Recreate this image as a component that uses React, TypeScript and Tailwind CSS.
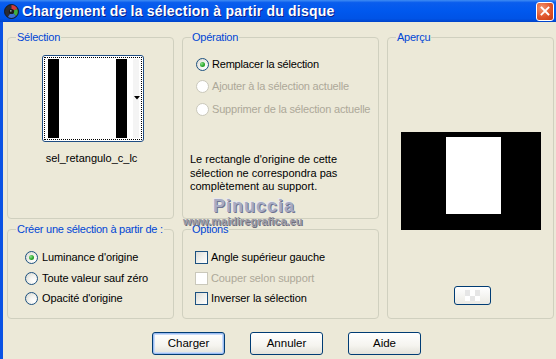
import React from "react";

function Radio({ checked = false, disabled = false }: { checked?: boolean; disabled?: boolean }) {
  return (
    <span
      className={
        "relative flex h-[13px] w-[13px] shrink-0 items-center justify-center rounded-full border " +
        (disabled
          ? "border-[#CAC8BB] bg-white"
          : "border-[#1C5180] bg-[radial-gradient(circle_at_70%_70%,#ffffff_0%,#f3f3ef_40%,#d6d5cc_100%)]")
      }
    >
      {checked && (
        <span className="h-[5px] w-[5px] rounded-full bg-[radial-gradient(circle_at_35%_35%,#8fe08f_0%,#2aa92a_55%,#1a7f1a_100%)]" />
      )}
    </span>
  );
}

function Check({ disabled = false }: { disabled?: boolean }) {
  return (
    <span
      className={
        "h-[13px] w-[13px] shrink-0 border " +
        (disabled
          ? "border-[#CAC8BB] bg-white"
          : "border-[#1C5180] bg-[linear-gradient(135deg,#dcdcd7_0%,#f0f0ec_50%,#ffffff_100%)]")
      }
    />
  );
}

function Group({
  label,
  className = "",
  children,
}: {
  label: string;
  className?: string;
  children?: React.ReactNode;
}) {
  return (
    <div className={"relative rounded-[4px] border border-[#D0D0BF] " + className}>
      <span className="absolute left-[8px] top-[-8px] whitespace-nowrap bg-[#ECE9D8] px-[1px] leading-[14px] tracking-[-0.25px] text-[#0046D5]">
        {label}
      </span>
      {children}
    </div>
  );
}

function XPButton({ label, def = false }: { label: string; def?: boolean }) {
  return (
    <div
      className={
        "flex h-[23px] w-[73px] items-center justify-center rounded-[3px] border border-[#003C74] bg-[linear-gradient(to_bottom,#ffffff_0%,#f5f4ef_60%,#e3e2da_100%)] text-black " +
        (def ? "shadow-[inset_0_0_0_1px_#9bbcf2,inset_0_0_0_2px_#c9dbf8]" : "")
      }
    >
      {label}
    </div>
  );
}

export default function App() {
  return (
    <div className="flex h-[359px] w-[556px] flex-col overflow-hidden bg-[#ECE9D8] font-['Liberation_Sans',Arial,sans-serif] text-[11px] text-black">
      {/* Title bar */}
      <div className="flex h-[22px] shrink-0 items-center bg-[linear-gradient(to_bottom,#3f8cf3_0%,#0a5ded_12%,#0058ee_50%,#0053e6_85%,#0043c9_100%)] pl-[4px] pr-[2px]">
        <svg width="15" height="15" viewBox="0 0 15 15" className="shrink-0">
          <circle cx="7.5" cy="7.5" r="7" fill="#2b2b33" stroke="#111" strokeWidth="0.8" />
          <path d="M7.5 7.5 L7.5 1 A6.5 6.5 0 0 1 13.2 5 Z" fill="#d23a3a" />
          <path d="M7.5 7.5 L13.2 5 A6.5 6.5 0 0 1 12 12 Z" fill="#3fae3f" />
          <path d="M7.5 7.5 L12 12 A6.5 6.5 0 0 1 4 13 Z" fill="#3a6fd8" />
          <circle cx="7.5" cy="7.5" r="2.6" fill="#1a1a1a" />
          <circle cx="6.8" cy="6.8" r="0.9" fill="#9aa" />
        </svg>
        <span className="ml-[3px] flex-1 whitespace-nowrap text-[14px] font-bold tracking-[0.2px] text-white [text-shadow:1px_1px_0_#0a1e8a]">
          Chargement de la sélection à partir du disque
        </span>
        <div className="flex h-[19px] w-[18px] items-center justify-center rounded-[3px] border border-white bg-[radial-gradient(circle_at_30%_30%,#f0926e_0%,#e0552b_55%,#c63a12_100%)]">
          <svg width="10" height="10" viewBox="0 0 10 10">
            <path d="M1.5 1.5 L8.5 8.5 M8.5 1.5 L1.5 8.5" stroke="white" strokeWidth="1.8" strokeLinecap="square" />
          </svg>
        </div>
      </div>

      {/* Body */}
      <div className="relative flex flex-1 flex-col border-l-[3px] border-[#0A52E4] pl-[4px] pt-[15px]">
        <div className="grid grid-cols-[167px_197px_167px] grid-rows-[182px_90px] gap-x-[8px] gap-y-[10px]">
          {/* Sélection */}
          <Group label="Sélection" className="flex flex-col">
            <div className="ml-[34px] mt-[17px] flex h-[87px] w-[102px] items-center justify-center rounded-[3px] border border-[#1f4c82] bg-white">
              <div className="relative flex h-[83px] w-[98px] items-center justify-center border border-dotted border-black">
                <div className="flex h-[79px] w-[91px]">
                  <div className="w-[11px] bg-black" />
                  <div className="w-[57px] bg-white" />
                  <div className="w-[11px] bg-black" />
                  <div className="w-[6px] bg-white" />
                  <div className="w-[6px] bg-[#f4f4f4]" />
                </div>
                <svg width="6" height="4" viewBox="0 0 6 4" className="absolute right-[1px] top-[38px]">
                  <path d="M0 0 L6 0 L3 3.5 Z" fill="black" />
                </svg>
              </div>
            </div>
            <div className="mt-[9px] pl-[2px] text-center text-[11px] leading-[14px]">sel_retangulo_c_lc</div>
          </Group>

          {/* Opération */}
          <Group label="Opération" className="flex flex-col pl-[13px] pt-[15px]">
            <div className="flex h-[22px] items-center gap-[3px] whitespace-nowrap tracking-[-0.2px]">
              <Radio checked />
              <span>Remplacer la sélection</span>
            </div>
            <div className="flex h-[23px] items-center gap-[3px] whitespace-nowrap tracking-[-0.2px] text-[#ACA899]">
              <Radio disabled />
              <span>Ajouter à la sélection actuelle</span>
            </div>
            <div className="flex h-[22px] items-center gap-[3px] whitespace-nowrap tracking-[-0.2px] text-[#ACA899]">
              <Radio disabled />
              <span>Supprimer de la sélection actuelle</span>
            </div>
            <div className="ml-[-6px] mt-[33px] leading-[13.5px]">
              Le rectangle d'origine de cette
              <br />
              sélection ne correspondra pas
              <br />
              complètement au support.
            </div>
          </Group>

          {/* Aperçu */}
          <Group label="Aperçu" className="row-span-2 flex flex-col items-center">
            <div className="ml-[1px] mt-[94px] flex h-[98px] w-[140px] items-start justify-center bg-black pt-[5px]">
              <div className="ml-[5px] h-[77px] w-[55px] bg-white" />
            </div>
            <div className="ml-[3px] mt-[56px] flex h-[19px] w-[37px] items-center justify-center rounded-[3px] border border-[#003C74] bg-[linear-gradient(to_bottom,#ffffff,#ebeae4)]">
              <div className="grid h-[11px] w-[15px] grid-cols-3 grid-rows-2">
                <div className="bg-[#e6e6e6]" />
                <div className="bg-white" />
                <div className="bg-[#e6e6e6]" />
                <div className="bg-white" />
                <div className="bg-[#e6e6e6]" />
                <div className="bg-white" />
              </div>
            </div>
          </Group>

          {/* Créer */}
          <Group label="Créer une sélection à partir de :" className="flex flex-col pl-[17px] pt-[17px]">
            <div className="flex h-[21px] items-center gap-[4px] whitespace-nowrap tracking-[-0.1px]">
              <Radio checked />
              <span>Luminance d'origine</span>
            </div>
            <div className="flex h-[20px] items-center gap-[4px] whitespace-nowrap tracking-[-0.1px]">
              <Radio />
              <span>Toute valeur sauf zéro</span>
            </div>
            <div className="flex h-[21px] items-center gap-[4px] whitespace-nowrap tracking-[-0.1px]">
              <Radio />
              <span>Opacité d'origine</span>
            </div>
          </Group>

          {/* Options */}
          <Group label="Options" className="flex flex-col pl-[12px] pt-[17px]">
            <div className="flex h-[21px] items-center gap-[3px] whitespace-nowrap tracking-[-0.1px]">
              <Check />
              <span>Angle supérieur gauche</span>
            </div>
            <div className="flex h-[20px] items-center gap-[3px] whitespace-nowrap tracking-[-0.1px] text-[#ACA899]">
              <Check disabled />
              <span>Couper selon support</span>
            </div>
            <div className="flex h-[21px] items-center gap-[3px] whitespace-nowrap tracking-[-0.1px]">
              <Check />
              <span>Inverser la sélection</span>
            </div>
          </Group>
        </div>

        {/* Buttons */}
        <div className="ml-[145px] mt-[13px] flex gap-[25px] text-[11.5px]">
          <XPButton label="Charger" def />
          <XPButton label="Annuler" />
          <XPButton label="Aide" />
        </div>

        {/* Watermark */}
        <div className="pointer-events-none absolute left-[210px] top-[174px] whitespace-nowrap text-[18px] font-bold leading-[20px] tracking-[1px] text-[#a7abc3] [text-shadow:1px_1px_0_#6e7392,-1px_-1px_0_#e6e7ef]">
          Pinuccia
        </div>
        <div className="pointer-events-none absolute left-[180px] top-[194px] whitespace-nowrap text-[11px] font-bold leading-[11px] text-[#9a9aa6] [text-shadow:1px_1px_0_#6f6f7c]">
          www.maidiregrafica.eu
        </div>
      </div>
    </div>
  );
}
